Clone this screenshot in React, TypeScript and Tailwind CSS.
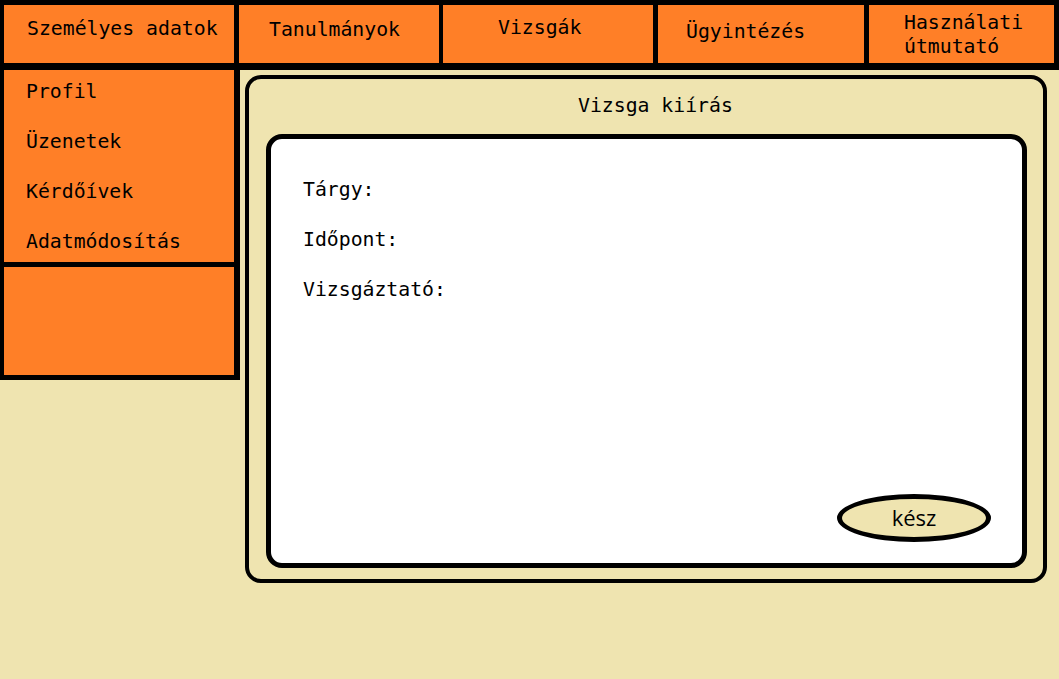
import React from "react";

const mono = { fontFamily: '"DejaVu Sans Mono", "Liberation Mono", monospace' };

export default function App() {
  return (
    <div className="w-[1059px] h-[679px] bg-[#EFE4B0] text-black overflow-hidden" style={mono}>
      {/* top nav */}
      <div className="flex h-[70px] bg-black pt-[5px] pb-[7px] pl-[4px] pr-[5px] text-[19.8px] leading-[24px]">
        <div className="w-[230px] bg-[#FF7F27] pt-[12px] pl-[23px]">Személyes adatok</div>
        <div className="w-[200px] ml-[5px] bg-[#FF7F27] pt-[13px] pl-[30px]">Tanulmányok</div>
        <div className="w-[210px] ml-[4px] bg-[#FF7F27] pt-[11px] pl-[55px]">Vizsgák</div>
        <div className="w-[206px] ml-[5px] bg-[#FF7F27] pt-[15px] pl-[28px]">Ügyintézés</div>
        <div className="flex-1 ml-[5px] bg-[#FF7F27] pt-[6px] pl-[35px]">
          <div>Használati</div>
          <div>útmutató</div>
        </div>
      </div>
      <div className="flex items-start">
        {/* sidebar */}
        <div className="w-[240px] bg-black pl-[4px] pr-[6px] pb-[5px] flex flex-col gap-[5px]">
          <div className="h-[192px] bg-[#FF7F27] pt-[7px] pl-[22px] flex flex-col gap-[20px] text-[19.8px] leading-[30px]">
            <div>Profil</div>
            <div>Üzenetek</div>
            <div>Kérdőívek</div>
            <div>Adatmódosítás</div>
          </div>
          <div className="h-[108px] bg-[#FF7F27]" />
        </div>
        {/* main */}
        <div className="ml-[5px] mt-[5px] w-[802px] h-[508px] border-4 border-black rounded-[16px] bg-[#EFE4B0] pl-[17px] pr-[16px] pb-[11px] flex flex-col">
          <div className="pt-[15px] h-[55px] pl-[312px] text-[19.8px] leading-[24px]">Vizsga kiírás</div>
          <div className="flex-1 border-[5px] border-black rounded-[16px] bg-white pt-[26px] pl-[32px] pr-[31px] pb-[21px] flex flex-col">
            <div className="text-[19.8px] leading-[50px]">
              <div>Tárgy:</div>
              <div>Időpont:</div>
              <div>Vizsgáztató:</div>
            </div>
            <div className="mt-auto self-end w-[154px] h-[48px] rounded-[50%] border-[5px] border-black bg-[#EFE4B0] flex items-center justify-center">
              <span className="text-[22px] leading-none pb-[2px]" style={{ fontFamily: '"Open Sans", "Noto Sans", sans-serif' }}>kész</span>
            </div>
          </div>
        </div>
      </div>
    </div>
  );
}
